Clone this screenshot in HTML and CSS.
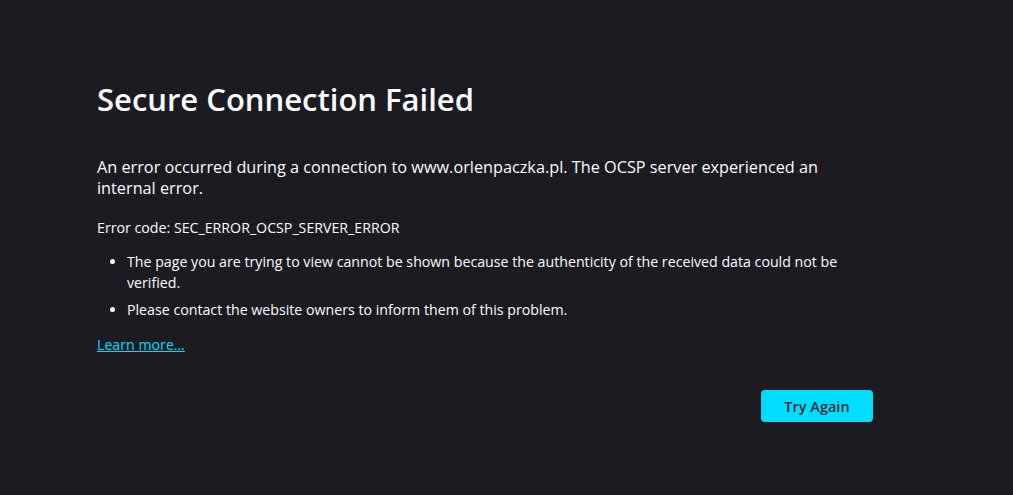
FILE: index.html
```html
<!DOCTYPE html>
<html lang="en">
<head>
<meta charset="utf-8">
<title>Problem loading page</title>
<link rel="stylesheet" href="styles.css">
</head>
<body>
<div class="container">
  <h1 class="title">Secure Connection Failed</h1>
  <p class="intro">An error occurred during a connection to www.orlenpaczka.pl. The OCSP server experienced an internal error.</p>
  <p class="code">Error code: SEC_ERROR_OCSP_SERVER_ERROR</p>
  <ul class="list">
    <li class="item">The page you are trying to view cannot be shown because the authenticity of the received data could not be verified.</li>
    <li class="item">Please contact the website owners to inform them of this problem.</li>
  </ul>
  <a class="learn" href="#">Learn more…</a>
  <div class="actions">
    <button class="primary">Try Again</button>
  </div>
</div>
</body>
</html>
```
FILE: styles.css
```css
html, body {
  margin: 0;
  padding: 0;
  background: #1c1b22;
  color: #fbfbfe;
  font-family: "Open Sans", "Noto Sans", sans-serif;
}
.container {
  width: 776px;
  margin: 0 0 0 97px;
  padding-top: 79px;
  display: flex;
  flex-direction: column;
  align-items: flex-start;
}
.title {
  margin: 0;
  font-size: 31px;
  line-height: 40px;
  font-weight: 600;
}
.intro {
  margin: 38px 0 0;
  font-size: 16.25px;
  line-height: 21px;
  width: 740px;
}
.code {
  margin: 18px 0 0;
  font-size: 14.2px;
  line-height: 21px;
}
.list {
  margin: 13px 0 0;
  padding-left: 30px;
  font-size: 14.2px;
  line-height: 21px;
}
.item + .item {
  margin-top: 6px;
}
.learn {
  margin-top: 14px;
  font-size: 14.2px;
  line-height: 21px;
  color: #00ddff;
  text-decoration: underline;
}
.actions {
  align-self: stretch;
  display: flex;
  justify-content: flex-end;
  margin-top: 35px;
}
.primary {
  width: 112px;
  height: 32px;
  border: none;
  border-radius: 4px;
  background: #00ddff;
  color: #2b2a33;
  font-family: "Open Sans", "Noto Sans", sans-serif;
  font-size: 14.5px;
  font-weight: 600;
  padding: 0;
}
```
